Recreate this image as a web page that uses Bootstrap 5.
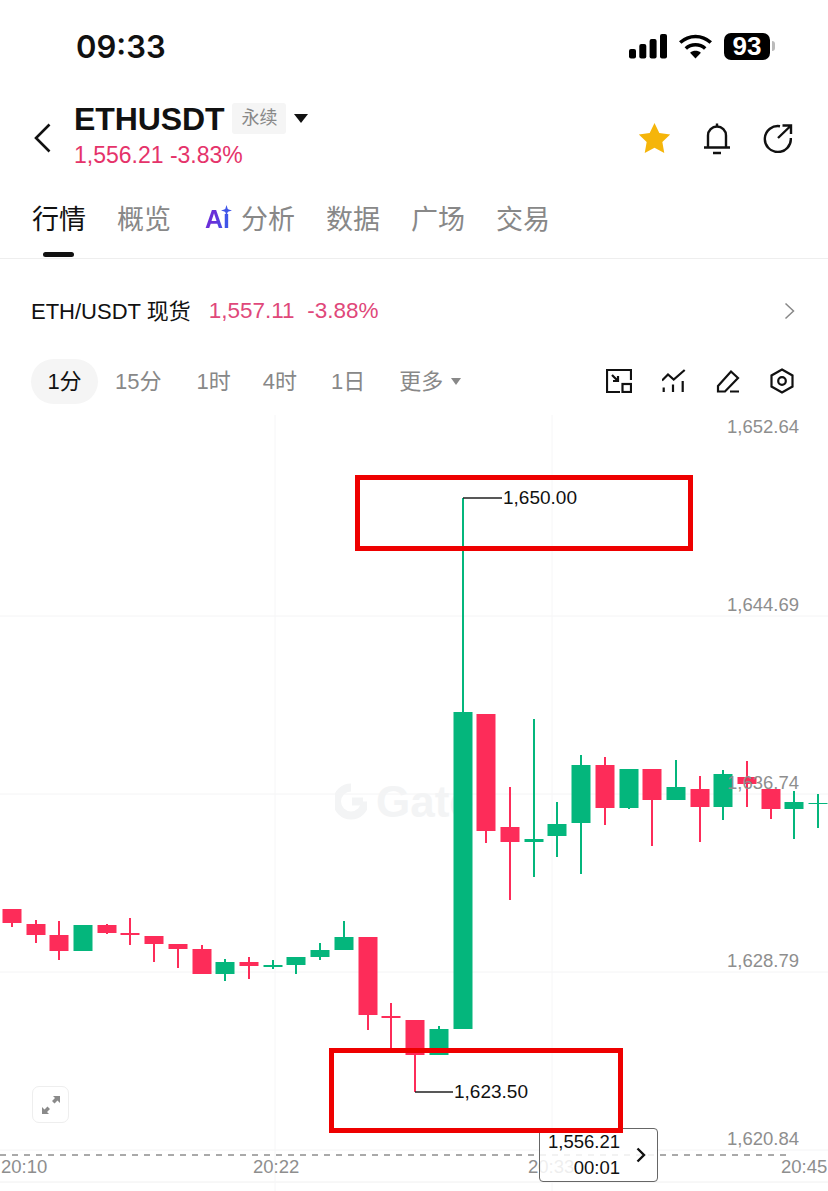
<!DOCTYPE html>
<html lang="zh">

<head>
    <meta charset="utf-8" />
    <meta name="viewport" content="width=device-width, initial-scale=1" />
    <title>ETHUSDT</title>
    <link href="https://cdn.jsdelivr.net/npm/bootstrap@5.3.3/dist/css/bootstrap.min.css" rel="stylesheet" />
    <style>
        body {
            width: 828px;
            height: 1191px;
            overflow: hidden;
            background: #fff;
            font-family: "Liberation Sans", "Noto Sans CJK SC", sans-serif;
            color: #111;
        }

        .status-row {
            height: 92px;
            padding: 0 53px 0 76px;
        }

        .clock {
            font-family: Inter, "Liberation Sans", sans-serif;
            font-size: 31px;
            font-weight: 600;
            line-height: 1;
            margin-top: 1px;
        }

        .battery-pill {
            width: 46px;
            height: 27px;
            border-radius: 7px;
            background: #000;
            color: #fff;
            font-size: 26px;
            font-weight: 700;
            line-height: 27px;
            text-align: center;
        }

        .battery-nub {
            width: 3px;
            height: 10px;
            margin-left: 2px;
            border-radius: 0 3px 3px 0;
            background: #bbb;
        }

        .head-row {
            height: 82px;
            padding: 0 35px 0 34px;
        }

        .head-icon-shift {
            margin-top: 10px;
        }

        .pair-block {
            margin-left: 23px;
            padding-top: 2px;
        }

        .pair-name {
            font-size: 32px;
            font-weight: 700;
            line-height: 36px;
            letter-spacing: -.1px;
        }

        .type-tag {
            width: 54px;
            height: 31px;
            background: #f5f5f5;
            color: #888;
            font-size: 18px;
            line-height: 31px;
            text-align: center;
            border-radius: 3px;
        }

        .drop-tri {
            width: 0;
            height: 0;
            border-left: 7px solid transparent;
            border-right: 7px solid transparent;
            border-top: 9px solid #111;
        }

        .drop-tri.grey {
            border-left-width: 5px;
            border-right-width: 5px;
            border-top: 7px solid #888;
        }

        .pair-price {
            color: #e5336a;
            font-size: 23px;
            line-height: 26px;
            margin-top: 5px;
        }

        .tab-row {
            height: 85px;
            padding: 0 0 0 32px;
            gap: 31px;
            border-bottom: 1px solid #eee;
            position: relative;
        }

        .tab-item {
            font-size: 27px;
            line-height: 38px;
            color: #888;
            padding-top: 27px;
        }

        .tab-item.is-on {
            color: #111;
            position: relative;
        }

        .tab-item.is-on::after {
            content: "";
            position: absolute;
            left: 11px;
            top: 78px;
            width: 31px;
            height: 5px;
            border-radius: 3px;
            background: #111;
        }

        .ai-wrap {
            position: relative;
            margin-left: 3px;
            margin-right: 11px;
            margin-top: -2px;
            line-height: 30px;
        }

        .ai-mark {
            font-size: 25px;
            font-weight: 700;
            background: linear-gradient(100deg, #6a2fd8 40%, #3f55e8 75%);
            -webkit-background-clip: text;
            background-clip: text;
            color: transparent;
        }

        .ai-spark {
            position: absolute;
            left: 16px;
            top: 1px;
        }

        .spot-row {
            height: 95px;
            padding: 9px 33px 0 31px;
            font-size: 22px;
        }

        .spot-price {
            color: #e0487a;
            font-size: 22.5px;
            margin-left: 18px;
        }

        .range-row {
            height: 54px;
            padding: 0 34px 0 31px;
            font-size: 22px;
            color: #888;
        }

        .range-on {
            width: 67px;
            height: 45px;
            border-radius: 23px;
            background: #f5f5f5;
            color: #111;
            line-height: 45px;
            text-align: center;
        }

        .chart-box {
            position: relative;
            height: 776px;
            margin-top: 7px;
        }

        .chart-box svg.plot {
            position: absolute;
            left: 0;
            top: 0;
        }

        .axis-label {
            position: absolute;
            color: #8e8e8e;
            font-size: 18.5px;
            line-height: 20px;
            white-space: nowrap;
        }

        .peak-label {
            position: absolute;
            color: #111;
            font-size: 19px;
            line-height: 22px;
        }

        .note-box {
            position: absolute;
            border: 5.5px solid #ee0000;
        }

        .wm-logo {
            position: absolute;
            left: 335px;
            top: 368px;
        }

        .wm-text {
            position: absolute;
            left: 376px;
            top: 362px;
            font-size: 44px;
            font-weight: 700;
            line-height: 50px;
            color: #f3f4f5;
        }

        .expand-btn {
            position: absolute;
            left: 32px;
            top: 671px;
            width: 37px;
            height: 37px;
            border: 1px solid #eee;
            border-radius: 7px;
            background: #fff;
        }

        .now-tip {
            position: absolute;
            left: 539px;
            top: 713px;
            width: 119px;
            height: 54px;
            border: 1px solid #666;
            border-radius: 4px;
            background: rgba(255, 255, 255, .85);
            color: #111;
            font-size: 18.5px;
            line-height: 26px;
            padding: 0 0 0 8px;
        }
    </style>
</head>

<body>
    <div class="status-row d-flex align-items-center justify-content-between">
        <div class="clock">09:33</div>
        <div class="d-flex align-items-center" style="gap:12px">
            <svg width="38" height="25" viewBox="0 0 38 25" fill="#000">
                <rect x="0" y="15" width="7" height="9.5" rx="2" />
                <rect x="10.3" y="10" width="7" height="14.5" rx="2" />
                <rect x="20.6" y="5" width="7" height="19.5" rx="2" />
                <rect x="31" y="0" width="7" height="24.5" rx="2" />
            </svg>
            <svg width="33" height="25" viewBox="0 0 33 25" fill="none" stroke="#000" stroke-width="3.6">
                <path d="M1.2 8.5C10 .4 23 .4 31.8 8.5" />
                <path d="M6.800 14.500c5.500-5 13.900-5 19.400 0" />
                <path d="M16.500 24.500l-5.400-5.800c3.200-2.600 7.600-2.600 10.800 0z" fill="#000" stroke="none" />
            </svg>
            <div class="d-flex align-items-center">
                <div class="battery-pill">93</div>
                <div class="battery-nub"></div>
            </div>
        </div>
    </div>

    <div class="head-row d-flex align-items-center">
        <svg class="head-icon-shift" width="17" height="30" viewBox="0 0 17 30" fill="none" stroke="#111" stroke-width="2.600">
            <path d="M15.500 1.500L2 15l13.500 13.500" />
        </svg>
        <div class="pair-block">
            <div class="d-flex align-items-center">
                <div class="pair-name">ETHUSDT</div>
                <div class="type-tag ms-2">永续</div>
                <div class="drop-tri ms-2"></div>
            </div>
            <div class="pair-price">1,556.21 -3.83%</div>
        </div>
        <div class="ms-auto d-flex align-items-center head-icon-shift" style="gap:32px">
            <svg width="33" height="33" viewBox="0 0 24 24" fill="#f5b50a">
                <path d="M12 .8l3.500 7.200 7.900 1.100-5.700 5.500 1.400 7.900L12 18.800l-7.100 3.700 1.400-7.900L.6 9.100 8.500 8z" />
            </svg>
            <svg width="28" height="33" viewBox="0 0 28 33" fill="none" stroke="#111" stroke-width="2.400">
                <path d="M5 25V13.500a9 9 0 0 1 18 0V25" />
                <path d="M1 25.500h26M10 31h8M14 4.500V1.500" />
            </svg>
            <svg width="30" height="30" viewBox="0 0 30 30" fill="none" stroke="#111" stroke-width="2.400">
                <path d="M17 3.200A13 13 0 1 0 27.800 15" />
                <path d="M15 15L27.500 3M19.500 2.500h8.500V11" />
            </svg>
        </div>
    </div>

    <div class="tab-row d-flex align-items-start">
        <div class="tab-item is-on">行情</div>
        <div class="tab-item">概览</div>
        <div class="tab-item d-flex align-items-center">
            <span class="ai-wrap">
                <span class="ai-mark">Ai</span>
                <svg class="ai-spark" width="11" height="11" viewBox="0 0 11 11" fill="#3f55e8">
                    <path d="M5.500 0l1.300 4.200 4.200 1.300-4.200 1.300L5.500 11 4.200 6.800 0 5.500l4.200-1.300z" />
                </svg>
            </span>分析
        </div>
        <div class="tab-item">数据</div>
        <div class="tab-item">广场</div>
        <div class="tab-item">交易</div>
    </div>

    <div class="spot-row d-flex align-items-center">
        <span>ETH/USDT 现货</span>
        <span class="spot-price">1,557.11&nbsp; -3.88%</span>
        <svg class="ms-auto" width="11" height="18" viewBox="0 0 11 18" fill="none" stroke="#888" stroke-width="1.500">
            <path d="M1.500 1.500L9.500 9l-8 7.500" />
        </svg>
    </div>

    <div class="range-row d-flex align-items-center">
        <div class="range-on">1分</div>
        <div style="margin-left:17px">15分</div>
        <div style="margin-left:35px">1时</div>
        <div style="margin-left:32px">4时</div>
        <div style="margin-left:34px">1日</div>
        <div style="margin-left:34px">更多</div>
        <div class="drop-tri grey ms-2"></div>
        <div class="ms-auto d-flex align-items-center" style="gap:30px">
            <svg width="26" height="24" viewBox="0 0 26 24" fill="none" stroke="#111" stroke-width="2.200">
                <path d="M25 11V1H1v22h13" />
                <path d="M6 6l6 6M12 7v5H7" />
                <rect x="16.500" y="15" width="8.500" height="8" />
            </svg>
            <svg width="24" height="24" viewBox="0 0 24 24" fill="none" stroke="#111" stroke-width="2.200">
                <path d="M0 11.500L6 5.500l5.700 5L22.700 1M1.700 18.500V23M11 15.500V23M20.700 12V23" />
            </svg>
            <svg width="24" height="24" viewBox="0 0 24 24" fill="none" stroke="#111" stroke-width="2.200">
                <path d="M2 17L15 2.500l7 6.500L9 22.500H2zM14 22.500h9" />
            </svg>
            <svg width="24" height="26" viewBox="0 0 24 26" fill="none" stroke="#111" stroke-width="2.200">
                <path d="M12 1.500l10.500 6v11L12 24.500l-10.500-6v-11z" />
                <circle cx="12" cy="13" r="3.800" />
            </svg>
        </div>
    </div>

    <div class="chart-box" id="chartBox">
        <svg class="wm-logo" width="32" height="37" viewBox="0 0 32 37" fill="none" stroke="#f3f4f5" stroke-width="8">
            <path d="M16 4.500a14 14 0 1 0 14 14" />
            <path d="M17 18.500h11" />
        </svg>
        <div class="wm-text">Gate</div>
        <svg class="plot" id="plot" width="828" height="776" viewBox="0 415 828 776"></svg>
        <div class="axis-label" style="right:29px;top:2px">1,652.64</div>
        <div class="axis-label" style="right:29px;top:180px">1,644.69</div>
        <div class="axis-label" style="right:29px;top:358px">1,636.74</div>
        <div class="axis-label" style="right:29px;top:536px">1,628.79</div>
        <div class="axis-label" style="right:29px;top:714px">1,620.84</div>
        <div class="axis-label" style="left:1px;top:742px">20:10</div>
        <div class="axis-label" style="left:253px;top:742px">20:22</div>
        <div class="axis-label" style="left:528px;top:742px">20:33</div>
        <div class="axis-label" style="left:781px;top:742px">20:45</div>
        <div class="peak-label" style="left:503px;top:72px">1,650.00</div>
        <div class="peak-label" style="left:454px;top:666px">1,623.50</div>
        <div class="expand-btn d-flex align-items-center justify-content-center">
            <svg width="20" height="20" viewBox="0 0 20 20" fill="#8a8a8a">
                <path d="M12 1h7v7l-2.500-2.500-3 3-2.500-2.500 3-3zM8 19H1v-7l2.500 2.500 3-3 2.500 2.500-3 3z" />
            </svg>
        </div>
        <div class="now-tip d-flex align-items-center">
            <div class="text-end">1,556.21<br />00:01</div>
            <svg class="ms-3" width="10" height="16" viewBox="0 0 10 16" fill="none" stroke="#111" stroke-width="2.400">
                <path d="M1.500 1.500L8 8l-6.500 6.500" />
            </svg>
        </div>
        <div class="note-box" style="left:355px;top:60px;width:338px;height:76px"></div>
        <div class="note-box" style="left:329px;top:633px;width:294px;height:85px"></div>
    </div>

    <script>
        const RED = "#fd2c59";
        const GREEN = "#04b67c";

        // x, wick top, body top, body bottom, wick bottom, up?
        const candles = [
            [12, 909, 909, 923, 927, 0],
            [36, 920, 924, 935, 943, 0],
            [59, 921, 935, 951, 960, 0],
            [83, 925, 925, 951, 951, 1],
            [107, 924, 925, 933, 934, 0],
            [130, 918, 933, 935, 945, 0],
            [154, 936, 936, 944, 962, 0],
            [178, 944, 944, 949, 968, 0],
            [202, 945, 949, 974, 974, 0],
            [225, 959, 962, 974, 981, 1],
            [249, 957, 962, 966, 979, 0],
            [273, 960, 965, 967, 969, 1],
            [296, 957, 957, 965, 974, 1],
            [320, 943, 950, 957, 960, 1],
            [344, 921, 937, 950, 950, 1],
            [368, 937, 937, 1015, 1030, 0],
            [391, 1003, 1016, 1018, 1052, 0],
            [415, 1020, 1020, 1055, 1092, 0],
            [439, 1026, 1029, 1055, 1055, 1],
            [463, 498, 712, 1029, 1029, 1],
            [486, 714, 714, 831, 843, 0],
            [510, 787, 827, 842, 900, 0],
            [534, 719, 839, 842, 877, 1],
            [557, 802, 824, 836, 857, 1],
            [581, 755, 765, 823, 874, 1],
            [605, 757, 765, 808, 825, 0],
            [629, 769, 769, 808, 809, 1],
            [652, 769, 769, 800, 846, 0],
            [676, 760, 787, 800, 800, 1],
            [700, 776, 789, 807, 842, 0],
            [723, 770, 774, 807, 820, 1],
            [747, 761, 777, 784, 807, 0],
            [771, 789, 789, 809, 819, 0],
            [794, 791, 802, 809, 839, 1],
            [818, 794, 803, 804, 828, 1]
        ];

        let svg = "";

        // grid
        [616, 794, 972, 1150].forEach(y => {
            svg += `<line x1="0" x2="828" y1="${y}" y2="${y}" stroke="#f4f4f5" />`;
        });
        svg += `<line x1="0" x2="828" y1="1182" y2="1182" stroke="#f0f0f0" />`;
        [275, 552].forEach(x => {
            svg += `<line x1="${x}" x2="${x}" y1="415" y2="1191" stroke="#f6f6f7" />`;
        });

        // last price dash line
        svg += `<line x1="0" x2="791" y1="1155" y2="1155" stroke="#555" stroke-dasharray="6 6" />`;

        candles.forEach(([x, wt, bt, bb, wb, up]) => {
            const c = up ? GREEN : RED;
            svg += `<rect x="${x - 1}" y="${wt}" width="2" height="${wb - wt}" fill="${c}" />`;
            svg += `<rect x="${x - 9.5}" y="${bt}" width="19" height="${bb - bt}" fill="${c}" />`;
        });

        // leader lines for high and low
        svg += `<path d="M463 498H502M415 1092H453" stroke="#222" fill="none" stroke-width="1.500" />`;

        document.getElementById("plot").innerHTML = svg;
    </script>
    <script src="https://cdn.jsdelivr.net/npm/bootstrap@5.3.3/dist/js/bootstrap.bundle.min.js"></script>
</body>

</html>
